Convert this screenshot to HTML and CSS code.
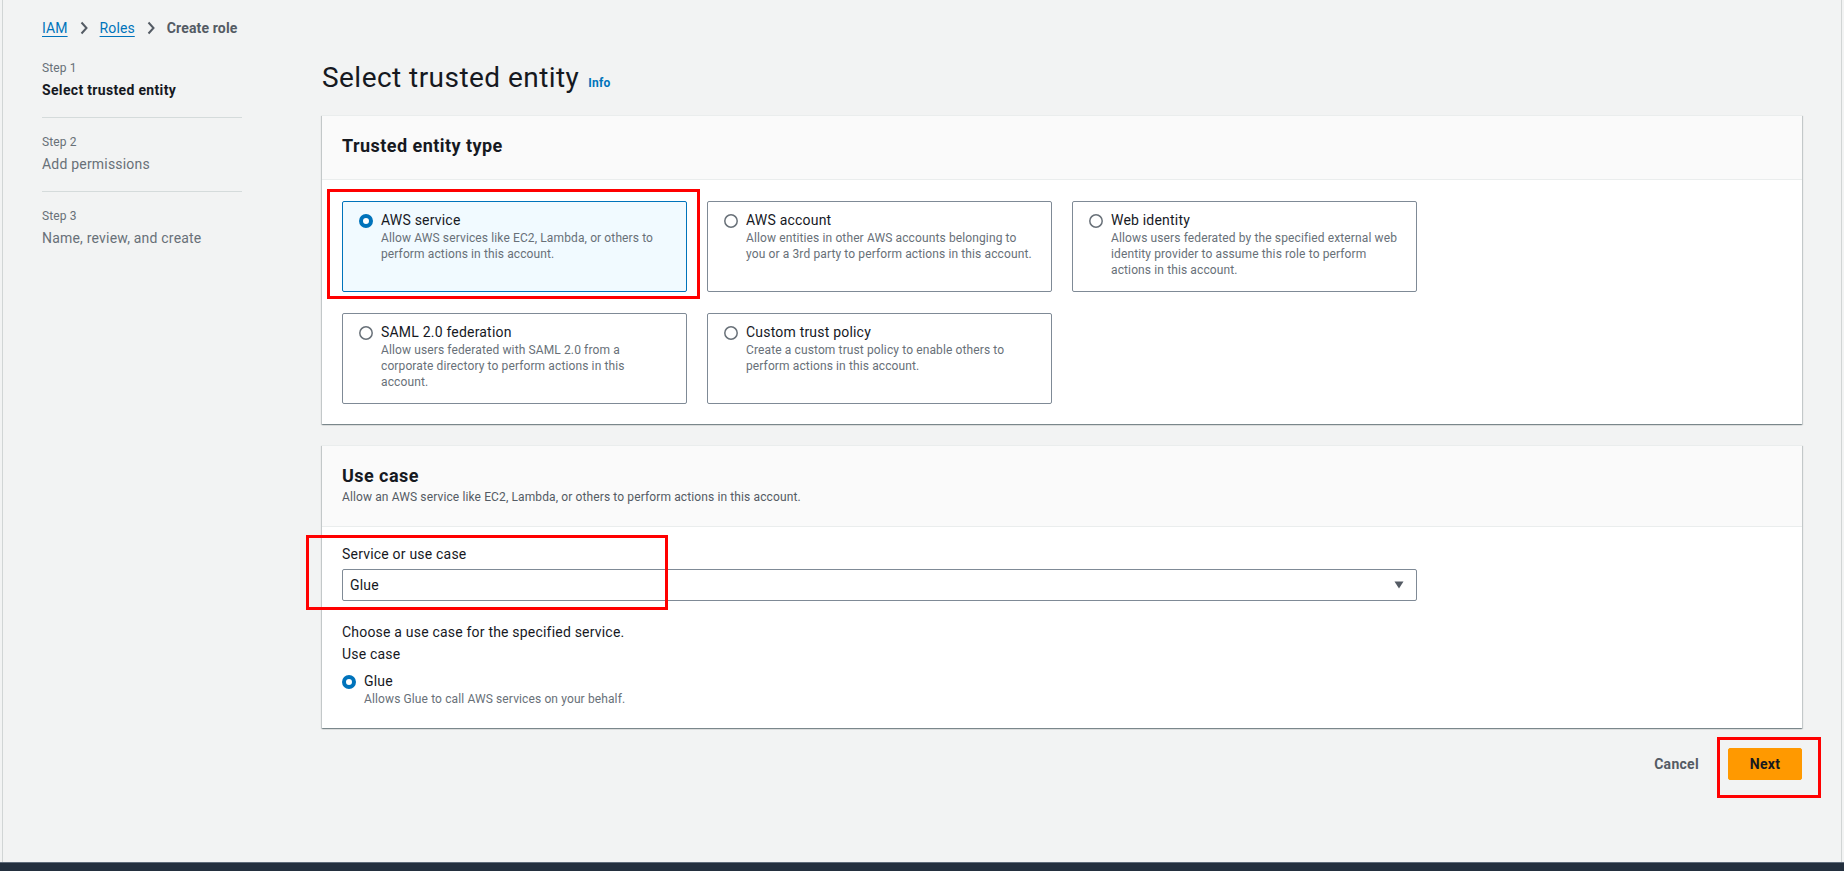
FILE: index.html
```html
<!DOCTYPE html>
<html lang="en">
<head>
<meta charset="utf-8">
<title>Create role</title>
<link rel="stylesheet" href="styles.css">
</head>
<body>
<div class="frame">
  <nav class="breadcrumbs">
    <a class="crumb-link" href="#">IAM</a>
    <svg class="chev" viewBox="0 0 8 14"><path d="M1.5 1.5 L6.5 7 L1.5 12.5" fill="none" stroke="#545b64" stroke-width="2"/></svg>
    <a class="crumb-link" href="#">Roles</a>
    <svg class="chev" viewBox="0 0 8 14"><path d="M1.5 1.5 L6.5 7 L1.5 12.5" fill="none" stroke="#545b64" stroke-width="2"/></svg>
    <span class="crumb-current">Create role</span>
  </nav>

  <div class="layout">
    <aside class="steps">
      <div class="step">
        <div class="step-num">Step 1</div>
        <div class="step-name active">Select trusted entity</div>
      </div>
      <div class="step">
        <div class="step-num">Step 2</div>
        <div class="step-name">Add permissions</div>
      </div>
      <div class="step">
        <div class="step-num">Step 3</div>
        <div class="step-name">Name, review, and create</div>
      </div>
    </aside>

    <main class="main">
      <h1 class="page-title"><span class="page-title-text">Select trusted entity</span><a class="info" href="#">Info</a></h1>

      <section class="container">
        <header class="container-header">
          <h2>Trusted entity type</h2>
        </header>
        <div class="container-body body-tiles">
          <div class="tiles">
            <div class="tile selected">
              <svg class="radio" viewBox="0 0 14 14"><circle cx="7" cy="7" r="5" fill="#fff" stroke="#0073bb" stroke-width="4"/></svg>
              <div class="tile-text">
                <div class="tile-title">AWS service</div>
                <div class="tile-desc">Allow AWS services like EC2, Lambda, or others to<br>perform actions in this account.</div>
              </div>
              <div class="annot annot-tile"></div>
            </div>
            <div class="tile">
              <svg class="radio" viewBox="0 0 14 14"><circle cx="7" cy="7" r="6.2" fill="#fff" stroke="#687078" stroke-width="1.5"/></svg>
              <div class="tile-text">
                <div class="tile-title">AWS account</div>
                <div class="tile-desc">Allow entities in other AWS accounts belonging to<br>you or a 3rd party to perform actions in this account.</div>
              </div>
            </div>
            <div class="tile">
              <svg class="radio" viewBox="0 0 14 14"><circle cx="7" cy="7" r="6.2" fill="#fff" stroke="#687078" stroke-width="1.5"/></svg>
              <div class="tile-text">
                <div class="tile-title">Web identity</div>
                <div class="tile-desc">Allows users federated by the specified external web<br>identity provider to assume this role to perform<br>actions in this account.</div>
              </div>
            </div>
            <div class="tile">
              <svg class="radio" viewBox="0 0 14 14"><circle cx="7" cy="7" r="6.2" fill="#fff" stroke="#687078" stroke-width="1.5"/></svg>
              <div class="tile-text">
                <div class="tile-title">SAML 2.0 federation</div>
                <div class="tile-desc">Allow users federated with SAML 2.0 from a<br>corporate directory to perform actions in this<br>account.</div>
              </div>
            </div>
            <div class="tile">
              <svg class="radio" viewBox="0 0 14 14"><circle cx="7" cy="7" r="6.2" fill="#fff" stroke="#687078" stroke-width="1.5"/></svg>
              <div class="tile-text">
                <div class="tile-title">Custom trust policy</div>
                <div class="tile-desc">Create a custom trust policy to enable others to<br>perform actions in this account.</div>
              </div>
            </div>
          </div>
        </div>
      </section>

      <section class="container container-2">
        <header class="container-header">
          <h2>Use case</h2>
          <p class="header-desc">Allow an AWS service like EC2, Lambda, or others to perform actions in this account.</p>
        </header>
        <div class="container-body body-form">
          <div class="field">
            <div class="field-label">Service or use case</div>
            <div class="select">
              <span>Glue</span>
              <svg class="caret" viewBox="0 0 10 8"><path d="M0.5 0.5 H9.5 L5 7.5 Z" fill="#545b64"/></svg>
            </div>
            <div class="annot annot-select"></div>
          </div>
          <div class="hint">Choose a use case for the specified service.</div>
          <div class="field-label label-usecase">Use case</div>
          <div class="radio-option">
            <svg class="radio" viewBox="0 0 14 14"><circle cx="7" cy="7" r="5" fill="#fff" stroke="#0073bb" stroke-width="4"/></svg>
            <div class="tile-text">
              <div class="tile-title">Glue</div>
              <div class="tile-desc">Allows Glue to call AWS services on your behalf.</div>
            </div>
          </div>
        </div>
      </section>

      <div class="actions">
        <button class="btn-link">Cancel</button>
        <div class="next-wrap">
          <button class="btn-primary">Next</button>
          <div class="annot annot-next"></div>
        </div>
      </div>
    </main>
  </div>
</div>
<div class="footer"></div>
</body>
</html>
```

FILE: styles.css
```css
* { box-sizing: border-box; }

html, body {
  margin: 0;
  padding: 0;
}

body {
  background: #f2f3f3;
  font-family: Roboto, "Liberation Sans", Arial, sans-serif;
  color: #16191f;
  font-size: 14px;
  line-height: 20px;
  letter-spacing: 0.2px;
  height: 871px;
  overflow: hidden;
}

.frame {
  margin-left: 2px;
  width: 1840px;
  height: 862px;
  border-left: 1px solid #d1d5d5;
  border-right: 1px solid #d1d5d5;
  padding: 18px 39px 0;
}

/* breadcrumbs */
.breadcrumbs {
  display: flex;
  align-items: center;
  height: 20px;
}

.crumb-link {
  color: #0073bb;
  text-decoration: underline;
  text-underline-offset: 3px;
  letter-spacing: 0.1px;
}

.chev {
  width: 8px;
  height: 14px;
  margin: 0 12px;
}

.crumb-current {
  color: #545b64;
  font-weight: 700;
  letter-spacing: 0.15px;
}

/* layout */
.layout {
  display: flex;
  gap: 80px;
  margin-top: 20px;
}

.steps {
  width: 200px;
  flex: none;
}

.step {
  padding: 16px 0 17px;
  border-bottom: 1px solid #d5dbdb;
}

.step:first-child { padding-top: 2px; }
.step:last-child { border-bottom: none; }

.step-num {
  font-size: 12px;
  line-height: 16px;
  letter-spacing: 0.12px;
  color: #687078;
}

.step-name {
  margin-top: 4px;
  color: #687078;
}

.step-name.active {
  color: #16191f;
  font-weight: 700;
  letter-spacing: 0.33px;
}

.main {
  flex: 1;
  min-width: 0;
}

.page-title {
  display: flex;
  align-items: baseline;
  gap: 9px;
  margin: 2px 0 0;
  height: 36px;
  font-weight: 400;
  color: #16191f;
}

.page-title-text {
  font-size: 28px;
  line-height: 36px;
  letter-spacing: 0.45px;
}

.info {
  font-size: 12px;
  line-height: 16px;
  font-weight: 700;
  letter-spacing: 0.2px;
  color: #0073bb;
  text-decoration: none;
}

/* containers */
.container {
  background: #fff;
  border-top: 1px solid #eaeded;
  box-shadow: 0 1px 1px 0 rgba(0, 28, 36, 0.3), 1px 1px 1px 0 rgba(0, 28, 36, 0.15), -1px 1px 1px 0 rgba(0, 28, 36, 0.15);
  margin-top: 19px;
}

.container-2 { margin-top: 21px; }

.container-header {
  background: #fafafa;
  border-bottom: 1px solid #eaeded;
  padding: 18px 20px 21px;
}

.container-header h2 {
  margin: 0;
  font-size: 18px;
  line-height: 24px;
  font-weight: 700;
  letter-spacing: 0.45px;
}

.header-desc {
  margin: 1px 0 0;
  font-size: 12px;
  line-height: 16px;
  letter-spacing: 0.12px;
  color: #545b64;
}

.container-body { padding: 21px 20px 20px; }
.body-form { padding: 17px 20px 21px; }

/* tiles */
.tiles {
  display: grid;
  grid-template-columns: repeat(3, 345px);
  column-gap: 20px;
  row-gap: 21px;
}

.tile {
  position: relative;
  display: flex;
  align-items: flex-start;
  gap: 8px;
  border: 1px solid #7f8a96;
  border-radius: 2px;
  padding: 8px 16px 13px;
  background: #fff;
}

.tile.selected {
  border-color: #0073bb;
  background: #f1faff;
}

.radio {
  width: 14px;
  height: 14px;
  flex: none;
  margin-top: 4px;
}

.tile-title {
  font-size: 14px;
  line-height: 20px;
  color: #16191f;
}

.tile-desc {
  font-size: 12px;
  line-height: 16px;
  letter-spacing: 0.12px;
  color: #687078;
  white-space: nowrap;
}

/* form */
.field {
  position: relative;
  width: 1075px;
}

.field-label {
  color: #16191f;
}

.label-usecase { margin-top: 2px; }

.select {
  margin-top: 5px;
  height: 32px;
  border: 1px solid #7f8a96;
  border-radius: 2px;
  display: flex;
  align-items: center;
  justify-content: space-between;
  padding: 0 12px 0 7px;
  background: #fff;
}

.caret {
  width: 10px;
  height: 8px;
}

.hint {
  margin-top: 21px;
  color: #16191f;
}

.radio-option {
  display: flex;
  gap: 8px;
  margin-top: 7px;
}

/* actions */
.actions {
  display: flex;
  justify-content: flex-end;
  align-items: center;
  margin-top: 20px;
  gap: 29px;
}

.btn-link {
  border: none;
  background: none;
  padding: 0;
  font-family: inherit;
  font-size: 14px;
  line-height: 20px;
  font-weight: 700;
  letter-spacing: 0.3px;
  color: #545b64;
}

.next-wrap { position: relative; }

.btn-primary {
  display: block;
  height: 32px;
  width: 74px;
  border: 1px solid #ff9900;
  border-radius: 2px;
  background: #ff9900;
  font-family: inherit;
  font-size: 14px;
  font-weight: 700;
  letter-spacing: 0.3px;
  color: #16191f;
  padding: 0;
}

/* annotation boxes */
.annot {
  position: absolute;
  border: 3px solid #ff0000;
  pointer-events: none;
}

.annot-tile {
  left: -16px;
  top: -13px;
  width: 373px;
  height: 110px;
}

.annot-select {
  left: -36px;
  top: -9px;
  width: 362px;
  height: 75px;
}

.annot-next {
  left: -11px;
  top: -11px;
  width: 104px;
  height: 61px;
}

.footer {
  height: 9px;
  background: #232f3e;
  border-top: 1px solid #5f6b7a;
}
```
